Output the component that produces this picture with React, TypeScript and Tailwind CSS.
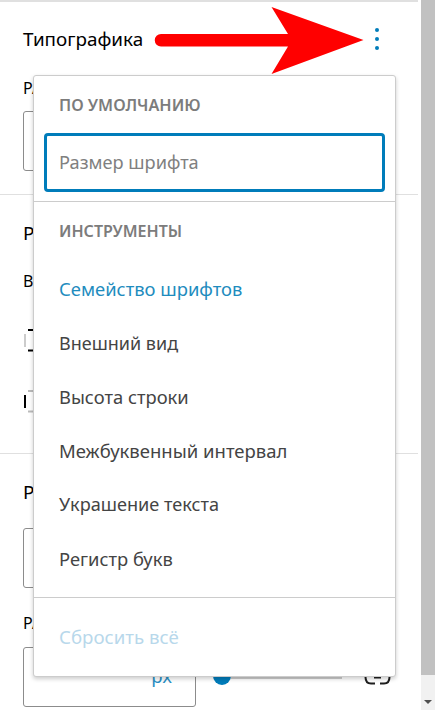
const font = { fontFamily: '"Noto Sans", sans-serif' };

function MenuItem({ children, className }: { children: React.ReactNode; className: string }) {
  return <div className={`flex h-[54px] items-center px-[25px] ${className}`}>{children}</div>;
}

function Arrow() {
  return (
    <svg className="absolute left-[154px] top-[6px]" width="212" height="70" viewBox="0 0 212 70">
      <path d="M7 28 H134 L117.5 1 L209.5 34 L117.5 68 L134 40.5 H7 A6.2 6.2 0 0 1 7 28 Z" fill="#ff0000" />
    </svg>
  );
}

function SideIcon({ vertical }: { vertical: boolean }) {
  return (
    <svg width="12" height="26" viewBox="0 0 12 26" className="block">
      <rect x="5" y="1" width="5" height="2" fill={vertical ? "#000" : "#bbb"} />
      <rect x="5" y="21.5" width="5" height="2" fill={vertical ? "#000" : "#bbb"} />
      <rect x="1" y="6" width="2" height="13" fill={vertical ? "#ccc" : "#000"} />
    </svg>
  );
}

export default function App() {
  return (
    <div style={font} className="relative h-[710px] w-[435px] overflow-hidden bg-white text-black">
      <div className="flex h-full">
        <div className="h-full w-[418px] border-t-2 border-[#e0e0e0]">
          <section className="h-[193px] border-b border-[#e0e0e0] px-[23px] pt-[25px]">
            <div className="flex h-6 items-center justify-between">
              <h2 className="text-[18.85px] leading-6">Типографика</h2>
              <div className="mr-[16px] flex flex-col gap-[5px]">
                <span className="size-[4px] rounded-full bg-[#007cba]" />
                <span className="size-[4px] rounded-full bg-[#007cba]" />
                <span className="size-[4px] rounded-full bg-[#007cba]" />
              </div>
            </div>
            <div className="mt-[25px] text-[16px] leading-6">РА</div>
            <div className="mt-[11px] h-[60px] w-[173px] rounded-[3px] border border-[#8c8c8c]" />
          </section>
          <section className="h-[259px] border-b border-[#e0e0e0] px-[23px] pt-[26px]">
            <h2 className="text-[18.85px] leading-6">Р</h2>
            <div className="mt-[24px] text-[16px] leading-6">В</div>
            <div className="mt-[35px]"><SideIcon vertical /></div>
            <div className="mt-[35px]"><SideIcon vertical={false} /></div>
          </section>
          <section className="px-[23px] pt-[26px]">
            <h2 className="text-[18.85px] leading-6">Р</h2>
            <div className="mt-[24px] h-[60px] w-[173px] rounded-[3px] border border-[#8c8c8c]" />
            <div className="mt-[23px] text-[16px] leading-6">РА</div>
            <div className="mt-[12px] flex items-start">
              <div className="flex h-[60px] w-[173px] items-start justify-end rounded-[3px] border border-[#8c8c8c] pr-[23px] pt-[16px] text-[18.5px] leading-6 text-[#2a8fc4]">
                px
              </div>
              <div className="ml-[17px] mt-[20px] size-[18px] rounded-full bg-[#007cba]" />
              <div className="mt-[28px] h-[4px] w-[111px] bg-[#ccc]" />
              <svg className="ml-[22px] mt-[26px]" width="28" height="14" viewBox="0 0 28 14">
                <path d="M11 10.5 H7 C3.5 10.5 1.5 8 1.5 4 M16 10.5 H20 C23.5 10.5 25.5 8 25.5 4 M10 4.5 H17" fill="none" stroke="#1e1e1e" strokeWidth="2" />
              </svg>
            </div>
          </section>
        </div>
        <div className="ml-[3px] flex h-full w-[14px] flex-col bg-[#f1f1f1]">
          <div className="h-[675px] bg-[#c1c1c1]" />
          <div className="mt-auto mb-[6px] flex justify-center">
            <div className="h-0 w-0 border-x-[4px] border-t-[4px] border-x-transparent border-t-[#505050]" />
          </div>
        </div>
      </div>

      <Arrow />

      <div className="absolute left-[33px] top-[75px] h-[602px] w-[363px] rounded-[3px] border border-[#ccc] bg-white shadow-[0_2px_4px_rgba(0,0,0,0.2)]">
        <div className="border-b border-[#ccc] px-[10px] pb-[9px]">
          <div className="flex h-[57px] items-center px-[15px] pt-[1px] text-[16.2px] font-semibold text-[#7c7c7c]">ПО УМОЛЧАНИЮ</div>
          <div className="flex h-[59px] items-center rounded-[4px] border-[3px] border-[#007cba] px-3 pt-[1px] text-[18.2px] text-[#808080]">Размер шрифта</div>
        </div>
        <div className="border-b border-[#ccc] pb-[11px]">
          <div className="flex h-[60px] items-center px-[25px] pb-[2px] text-[16px] font-semibold text-[#7c7c7c]">ИНСТРУМЕНТЫ</div>
          <MenuItem className="text-[18.4px] text-[#1e8cbe]">Семейство шрифтов</MenuItem>
          <MenuItem className="text-[18px] text-[#444]">Внешний вид</MenuItem>
          <MenuItem className="text-[18.35px] text-[#444]">Высота строки</MenuItem>
          <MenuItem className="text-[18.5px] text-[#444]">Межбуквенный интервал</MenuItem>
          <MenuItem className="text-[18.15px] text-[#444]">Украшение текста</MenuItem>
          <MenuItem className="text-[18.35px] text-[#444]">Регистр букв</MenuItem>
        </div>
        <div className="flex h-[78px] items-center px-[25px] text-[18.65px] text-[#b8d8eb]">Сбросить всё</div>
      </div>
    </div>
  );
}
